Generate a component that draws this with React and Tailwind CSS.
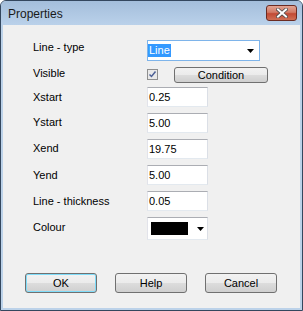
import React from "react";

const btn =
  "h-[20px] w-[72px] rounded-[3px] border border-[#707070] bg-[linear-gradient(to_bottom,#f2f2f2_0%,#ebebeb_50%,#dddddd_50%,#cfcfcf_100%)] flex items-center justify-center text-[11px] text-black leading-none";

const input =
  "h-[20px] w-[61px] border border-[#abadb3] border-l-[#e2e3ea] border-r-[#dbdfe6] border-b-[#e3e9ef] bg-white flex items-center pl-[1px] text-[11px] text-black leading-none";

function Label({ children, mt }) {
  return (
    <div className={`w-[114px] shrink-0 leading-[13px] text-[11px] text-black ${mt}`}>{children}</div>
  );
}

function Arrow() {
  return (
    <svg width="7" height="4" viewBox="0 0 7 4" className="block">
      <path d="M0 0H7L3.5 4Z" fill="#000" />
    </svg>
  );
}

export default function App() {
  return (
    <div className="w-[303px] h-[311px] font-['Liberation_Sans',Arial,sans-serif]">
      <div className="h-full flex flex-col rounded-t-[6px] border border-[#34475e] bg-[#bcd2e9]">
        {/* title bar */}
        <div className="h-[24px] shrink-0 flex items-center justify-between pl-[7px] pr-[5px] rounded-t-[5px] bg-[linear-gradient(to_bottom,#a4bedb,#bad1ea)]">
          <span className="text-[12px] text-[#1a1a1a] leading-none mt-[1px]">Properties</span>
          <div className="w-[31px] h-[16px] rounded-[3px] border border-[#6b2b22] bg-[linear-gradient(to_bottom,#e2a493_0%,#d27a66_45%,#c24a34_55%,#cf6f55_100%)] flex items-center justify-center">
            <svg width="12" height="10" viewBox="0 0 12 10">
              <path d="M2 1.5L10 8.5M10 1.5L2 8.5" stroke="#4a4a4a" strokeWidth="3.6" strokeLinecap="square" />
              <path d="M2 1.5L10 8.5M10 1.5L2 8.5" stroke="#ffffff" strokeWidth="2" strokeLinecap="square" />
            </svg>
          </div>
        </div>
        {/* content */}
        <div className="flex-1 mx-[2px] mb-[2px] bg-[#f0f0f0] flex flex-col pl-[30px] pt-[15px]">
          {/* Line type */}
          <div className="flex items-start h-[21px]">
            <Label mt="mt-[1px]">Line - type</Label>
            <div className="h-[21px] w-[113px] border border-[#7eb4ea] bg-white flex items-center justify-between pr-[5px]">
              <span className="ml-[0px] h-[13px] px-[1px] bg-[#3399ff] text-white text-[11px] leading-[13px]">Line</span>
              <Arrow />
            </div>
          </div>
          {/* Visible */}
          <div className="flex items-start h-[16px] mt-[6px]">
            <Label mt="mt-[0px]">Visible</Label>
            <div className="mt-[2px] w-[11px] h-[11px] border border-[#8f8f8f] bg-[#e9e9e9] flex items-center justify-center">
              <svg width="9" height="9" viewBox="0 0 9 9">
                <path d="M1.5 4.5L3.5 6.5L7.5 1.5" stroke="#4c5f95" strokeWidth="1.5" fill="none" />
              </svg>
            </div>
            <div className="ml-[16px] h-[16px] w-[94px] rounded-[3px] border border-[#707070] bg-[linear-gradient(to_bottom,#f2f2f2_0%,#ebebeb_50%,#dddddd_50%,#cfcfcf_100%)] flex items-center justify-center text-[11px] leading-none text-black">
              Condition
            </div>
          </div>
          {/* Xstart */}
          <div className="flex items-start h-[20px] mt-[4px]">
            <Label mt="mt-[4px]">Xstart</Label>
            <div className={input}>0.25</div>
          </div>
          <div className="flex items-start h-[20px] mt-[6px]">
            <Label mt="mt-[3px]">Ystart</Label>
            <div className={input}>5.00</div>
          </div>
          <div className="flex items-start h-[20px] mt-[6px]">
            <Label mt="mt-[3px]">Xend</Label>
            <div className={input}>19.75</div>
          </div>
          <div className="flex items-start h-[20px] mt-[6px]">
            <Label mt="mt-[4px]">Yend</Label>
            <div className={input}>5.00</div>
          </div>
          <div className="flex items-start h-[20px] mt-[6px]">
            <Label mt="mt-[4px]">Line - thickness</Label>
            <div className={input}>0.05</div>
          </div>
          <div className="flex items-start h-[23px] mt-[6px]">
            <Label mt="mt-[4px]">Colour</Label>
            <div className="h-[23px] w-[61px] border border-[#abadb3] border-l-[#e2e3ea] border-r-[#dbdfe6] border-b-[#e3e9ef] bg-white flex items-center pl-[3px] pr-[3px] justify-between">
              <div className="w-[37px] h-[13px] bg-black" />
              <Arrow />
            </div>
          </div>
          {/* buttons */}
          <div className="flex gap-[18px] mt-[33px] -ml-[8px]">
            <div className={`${btn} border-[#3a8cc4] shadow-[inset_0_0_0_1px_#7fdcf9]`}>OK</div>
            <div className={btn}>Help</div>
            <div className={btn}>Cancel</div>
          </div>
        </div>
      </div>
    </div>
  );
}
